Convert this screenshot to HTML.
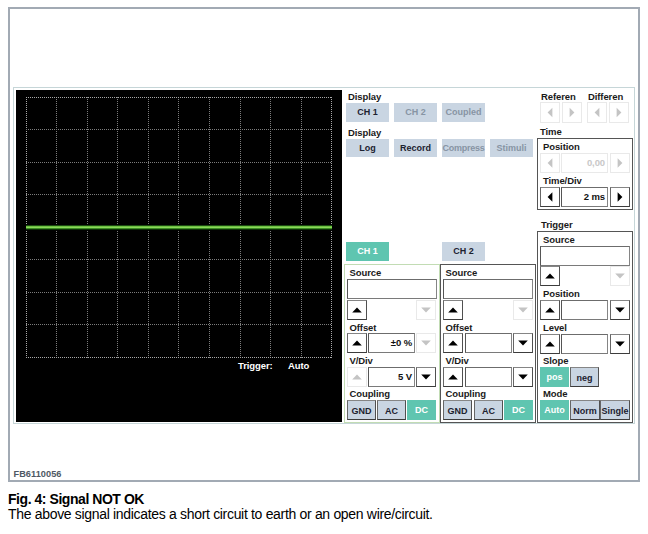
<!DOCTYPE html>
<html><head><meta charset="utf-8"><style>
html,body{margin:0;padding:0;background:#fff;width:648px;height:534px;overflow:hidden;}
body>div,#c>div{position:absolute;box-sizing:border-box;}
.t{position:absolute;font:bold 9.5px "Liberation Sans", sans-serif;line-height:7px;letter-spacing:-0.1px;white-space:nowrap;color:#1a1a1a;}
.b{position:absolute;box-sizing:border-box;font:bold 9px "Liberation Sans", sans-serif;text-align:center;white-space:nowrap;}
svg{position:absolute;left:0;top:0;}
</style></head><body>

<div style="left:8px;top:7px;width:632px;height:475px;border:2px solid #a2aab4;"></div>
<div style="left:13px;top:87px;width:622px;height:337px;border:1px solid #c6d6d8;"></div>
<div style="left:16px;top:90px;width:326px;height:332px;background:#000;"></div>
<svg width="648" height="534" style="position:absolute;left:0;top:0"><line x1="26.5" y1="97" x2="26.5" y2="358" stroke="#a8a8a8" stroke-dasharray="1 1"/><line x1="56.5" y1="97" x2="56.5" y2="358" stroke="#7c7c7c" stroke-dasharray="1 1"/><line x1="87.5" y1="97" x2="87.5" y2="358" stroke="#7c7c7c" stroke-dasharray="1 1"/><line x1="117.5" y1="97" x2="117.5" y2="358" stroke="#7c7c7c" stroke-dasharray="1 1"/><line x1="148.5" y1="97" x2="148.5" y2="358" stroke="#7c7c7c" stroke-dasharray="1 1"/><line x1="178.5" y1="97" x2="178.5" y2="358" stroke="#7c7c7c" stroke-dasharray="1 1"/><line x1="209.5" y1="97" x2="209.5" y2="358" stroke="#7c7c7c" stroke-dasharray="1 1"/><line x1="240.5" y1="97" x2="240.5" y2="358" stroke="#7c7c7c" stroke-dasharray="1 1"/><line x1="270.5" y1="97" x2="270.5" y2="358" stroke="#7c7c7c" stroke-dasharray="1 1"/><line x1="301.5" y1="97" x2="301.5" y2="358" stroke="#7c7c7c" stroke-dasharray="1 1"/><line x1="331.5" y1="97" x2="331.5" y2="358" stroke="#a8a8a8" stroke-dasharray="1 1"/><line x1="26" y1="97.5" x2="332" y2="97.5" stroke="#a8a8a8" stroke-dasharray="1 1"/><line x1="26" y1="129.5" x2="332" y2="129.5" stroke="#7c7c7c" stroke-dasharray="1 1"/><line x1="26" y1="162.5" x2="332" y2="162.5" stroke="#7c7c7c" stroke-dasharray="1 1"/><line x1="26" y1="194.5" x2="332" y2="194.5" stroke="#7c7c7c" stroke-dasharray="1 1"/><line x1="26" y1="227.5" x2="332" y2="227.5" stroke="#7c7c7c" stroke-dasharray="1 1"/><line x1="26" y1="259.5" x2="332" y2="259.5" stroke="#7c7c7c" stroke-dasharray="1 1"/><line x1="26" y1="292.5" x2="332" y2="292.5" stroke="#7c7c7c" stroke-dasharray="1 1"/><line x1="26" y1="324.5" x2="332" y2="324.5" stroke="#7c7c7c" stroke-dasharray="1 1"/><line x1="26" y1="357.5" x2="332" y2="357.5" stroke="#a8a8a8" stroke-dasharray="1 1"/><rect x="26" y="225" width="306" height="1" fill="#1a4a10"/><rect x="26" y="226" width="306" height="1" fill="#6cc040"/><rect x="26" y="227" width="306" height="1" fill="#8ad85a"/><rect x="26" y="228" width="306" height="1" fill="#3c8c24"/><rect x="26" y="229" width="306" height="1" fill="#0c3006"/></svg>
<div class="t" style="left:238px;top:362px;color:#fff;">Trigger:</div>
<div class="t" style="left:288px;top:362px;color:#fff;">Auto</div>
<div class="t" style="left:348px;top:93px;">Display</div>
<div class="b" style="left:346px;top:103px;width:43px;height:19px;line-height:19px;background:#c9d5e2;color:#1c2230;"><span style="">CH 1</span></div>
<div class="b" style="left:394px;top:103px;width:43px;height:19px;line-height:19px;background:#c9d5e2;color:#8794a4;"><span style="">CH 2</span></div>
<div class="b" style="left:442px;top:103px;width:43px;height:19px;line-height:19px;background:#c9d5e2;color:#8794a4;"><span style="">Coupled</span></div>
<div class="t" style="left:348px;top:129px;">Display</div>
<div class="b" style="left:346px;top:139px;width:43px;height:18px;line-height:18px;background:#c9d5e2;color:#1c2230;"><span style="">Log</span></div>
<div class="b" style="left:394px;top:139px;width:43px;height:18px;line-height:18px;background:#c9d5e2;color:#1c2230;"><span style="">Record</span></div>
<div class="b" style="left:442px;top:139px;width:43px;height:18px;line-height:18px;background:#c9d5e2;color:#8794a4;letter-spacing:-0.25px;"><span style="">Compress</span></div>
<div class="b" style="left:490px;top:139px;width:43px;height:18px;line-height:18px;background:#c9d5e2;color:#8794a4;"><span style="">Stimuli</span></div>
<div class="t" style="left:541px;top:93px;">Referen</div>
<div class="t" style="left:588px;top:93px;">Differen</div>
<div style="left:540px;top:102px;width:20px;height:21px;border:1px solid #e9e9e9;background:#fff;"></div>
<div style="left:562px;top:102px;width:20px;height:21px;border:1px solid #e9e9e9;background:#fff;"></div>
<div style="left:587px;top:102px;width:20px;height:21px;border:1px solid #e9e9e9;background:#fff;"></div>
<div style="left:609px;top:102px;width:20px;height:21px;border:1px solid #e9e9e9;background:#fff;"></div>
<div class="t" style="left:540px;top:128px;">Time</div>
<div style="left:537px;top:138px;width:96px;height:72px;border:1px solid #555;"></div>
<div class="t" style="left:543px;top:143px;">Position</div>
<div style="left:540px;top:153px;width:20px;height:20px;border:1px solid #e9e9e9;background:#fff;"></div>
<div style="left:561px;top:153px;width:47px;height:20px;border:1px solid #e9e9e9;background:#fff;"></div>
<div class="t" style="left:561px;top:153px;width:44px;height:20px;line-height:20px;text-align:right;color:#c8c8c8;">0,00</div>
<div style="left:610px;top:153px;width:20px;height:20px;border:1px solid #e9e9e9;background:#fff;"></div>
<div class="t" style="left:543px;top:177px;">Time/Div</div>
<div style="left:540px;top:187px;width:20px;height:20px;border:1px solid #555;border-color:#858585 #505050 #3c3c3c #666;background:#fff;"></div>
<div style="left:561px;top:187px;width:47px;height:20px;border:1px solid #777;border-color:#6c6c6c #858585 #7a7a7a #555;background:#fff;"></div>
<div class="t" style="left:561px;top:187px;width:44px;height:20px;line-height:20px;text-align:right;color:#111;">2 ms</div>
<div style="left:610px;top:187px;width:20px;height:20px;border:1px solid #555;border-color:#858585 #505050 #3c3c3c #666;background:#fff;"></div>
<div class="b" style="left:346px;top:242px;width:43px;height:19px;line-height:19px;background:#5fc5b0;color:#fff;"><span style="">CH 1</span></div>
<div class="b" style="left:442px;top:242px;width:43px;height:19px;line-height:19px;background:#c9d5e2;color:#1c2230;"><span style="">CH 2</span></div>
<div style="left:344px;top:264px;width:96px;height:159px;border:1px solid #c2dcb4;"></div>
<div class="t" style="left:349.5px;top:269px;">Source</div>
<div style="left:347px;top:279px;width:90px;height:20px;border:1px solid #777;border-color:#6c6c6c #858585 #7a7a7a #555;background:#fff;"></div>
<div style="left:347px;top:300px;width:20px;height:20px;border:1px solid #555;border-color:#858585 #505050 #3c3c3c #666;background:#fff;"></div>
<div style="left:416px;top:300px;width:20px;height:20px;border:1px solid #e9e9e9;background:#fff;"></div>
<div class="t" style="left:349.5px;top:324px;">Offset</div>
<div style="left:347px;top:333px;width:20px;height:20px;border:1px solid #555;border-color:#858585 #505050 #3c3c3c #666;background:#fff;"></div>
<div style="left:368px;top:333px;width:47px;height:20px;border:1px solid #777;border-color:#6c6c6c #858585 #7a7a7a #555;background:#fff;"></div>
<div class="t" style="left:368px;top:333px;width:44px;height:20px;line-height:20px;text-align:right;color:#111;">&plusmn;0 %</div>
<div style="left:416px;top:333px;width:20px;height:20px;border:1px solid #e9e9e9;background:#fff;"></div>
<div class="t" style="left:349.5px;top:357px;">V/Div</div>
<div style="left:347px;top:367px;width:20px;height:20px;border:1px solid #e9e9e9;background:#fff;"></div>
<div style="left:368px;top:367px;width:47px;height:20px;border:1px solid #777;border-color:#6c6c6c #858585 #7a7a7a #555;background:#fff;"></div>
<div class="t" style="left:368px;top:367px;width:44px;height:20px;line-height:20px;text-align:right;color:#111;">5 V</div>
<div style="left:416px;top:367px;width:20px;height:20px;border:1px solid #555;border-color:#858585 #505050 #3c3c3c #666;background:#fff;"></div>
<div class="t" style="left:349.5px;top:390px;">Coupling</div>
<div class="b" style="left:347px;top:400px;width:29px;height:20px;line-height:20px;border:1px solid #555;border-color:#858585 #505050 #3c3c3c #666;background:#fff;background:#c9d5e2;color:#1c2230;"><span style="">GND</span></div>
<div class="b" style="left:377px;top:400px;width:29px;height:20px;line-height:20px;border:1px solid #555;border-color:#858585 #505050 #3c3c3c #666;background:#fff;background:#c9d5e2;color:#1c2230;"><span style="">AC</span></div>
<div class="b" style="left:407px;top:400px;width:29px;height:20px;line-height:20px;background:#5fc5b0;color:#fff;"><span style="">DC</span></div>
<div style="left:440px;top:264px;width:96px;height:159px;border:1px solid #555;"></div>
<div class="t" style="left:445.5px;top:269px;">Source</div>
<div style="left:443px;top:279px;width:90px;height:20px;border:1px solid #777;border-color:#6c6c6c #858585 #7a7a7a #555;background:#fff;"></div>
<div style="left:443px;top:300px;width:20px;height:20px;border:1px solid #555;border-color:#858585 #505050 #3c3c3c #666;background:#fff;"></div>
<div style="left:513px;top:300px;width:20px;height:20px;border:1px solid #e9e9e9;background:#fff;"></div>
<div class="t" style="left:445.5px;top:324px;">Offset</div>
<div style="left:443px;top:333px;width:20px;height:20px;border:1px solid #555;border-color:#858585 #505050 #3c3c3c #666;background:#fff;"></div>
<div style="left:465px;top:333px;width:47px;height:20px;border:1px solid #777;border-color:#6c6c6c #858585 #7a7a7a #555;background:#fff;"></div>
<div style="left:513px;top:333px;width:20px;height:20px;border:1px solid #555;border-color:#858585 #505050 #3c3c3c #666;background:#fff;"></div>
<div class="t" style="left:445.5px;top:357px;">V/Div</div>
<div style="left:443px;top:367px;width:20px;height:20px;border:1px solid #555;border-color:#858585 #505050 #3c3c3c #666;background:#fff;"></div>
<div style="left:465px;top:367px;width:47px;height:20px;border:1px solid #777;border-color:#6c6c6c #858585 #7a7a7a #555;background:#fff;"></div>
<div style="left:513px;top:367px;width:20px;height:20px;border:1px solid #555;border-color:#858585 #505050 #3c3c3c #666;background:#fff;"></div>
<div class="t" style="left:445.5px;top:390px;">Coupling</div>
<div class="b" style="left:443px;top:400px;width:29px;height:20px;line-height:20px;border:1px solid #555;border-color:#858585 #505050 #3c3c3c #666;background:#fff;background:#c9d5e2;color:#1c2230;"><span style="">GND</span></div>
<div class="b" style="left:474px;top:400px;width:29px;height:20px;line-height:20px;border:1px solid #555;border-color:#858585 #505050 #3c3c3c #666;background:#fff;background:#c9d5e2;color:#1c2230;"><span style="">AC</span></div>
<div class="b" style="left:504px;top:400px;width:29px;height:20px;line-height:20px;background:#5fc5b0;color:#fff;"><span style="">DC</span></div>
<div class="t" style="left:541px;top:221px;">Trigger</div>
<div style="left:537px;top:231px;width:96px;height:192px;border:1px solid #555;"></div>
<div class="t" style="left:543px;top:236px;">Source</div>
<div style="left:540px;top:246px;width:90px;height:20px;border:1px solid #777;border-color:#6c6c6c #858585 #7a7a7a #555;background:#fff;"></div>
<div style="left:540px;top:266px;width:20px;height:20px;border:1px solid #555;border-color:#858585 #505050 #3c3c3c #666;background:#fff;"></div>
<div style="left:610px;top:266px;width:20px;height:20px;border:1px solid #e9e9e9;background:#fff;"></div>
<div class="t" style="left:543px;top:290px;">Position</div>
<div style="left:540px;top:300px;width:20px;height:20px;border:1px solid #555;border-color:#858585 #505050 #3c3c3c #666;background:#fff;"></div>
<div style="left:561px;top:300px;width:47px;height:20px;border:1px solid #777;border-color:#6c6c6c #858585 #7a7a7a #555;background:#fff;"></div>
<div style="left:610px;top:300px;width:20px;height:20px;border:1px solid #555;border-color:#858585 #505050 #3c3c3c #666;background:#fff;"></div>
<div class="t" style="left:543px;top:324px;">Level</div>
<div style="left:540px;top:334px;width:20px;height:20px;border:1px solid #555;border-color:#858585 #505050 #3c3c3c #666;background:#fff;"></div>
<div style="left:561px;top:334px;width:47px;height:20px;border:1px solid #777;border-color:#6c6c6c #858585 #7a7a7a #555;background:#fff;"></div>
<div style="left:610px;top:334px;width:20px;height:20px;border:1px solid #555;border-color:#858585 #505050 #3c3c3c #666;background:#fff;"></div>
<div class="t" style="left:543px;top:357px;">Slope</div>
<div class="b" style="left:540px;top:367px;width:29px;height:20px;line-height:20px;background:#5fc5b0;color:#fff;"><span style="">pos</span></div>
<div class="b" style="left:570px;top:367px;width:29px;height:20px;line-height:20px;border:1px solid #555;border-color:#858585 #505050 #3c3c3c #666;background:#fff;background:#c9d5e2;color:#1c2230;"><span style="">neg</span></div>
<div class="t" style="left:543px;top:390px;">Mode</div>
<div class="b" style="left:540px;top:400px;width:29px;height:20px;line-height:20px;background:#5fc5b0;color:#fff;"><span style="">Auto</span></div>
<div class="b" style="left:570px;top:400px;width:30px;height:20px;line-height:20px;border:1px solid #555;border-color:#858585 #505050 #3c3c3c #666;background:#fff;background:#c9d5e2;color:#1c2230;"><span style="">Norm</span></div>
<div class="b" style="left:600px;top:400px;width:30px;height:20px;line-height:20px;border:1px solid #555;border-color:#858585 #505050 #3c3c3c #666;background:#fff;background:#c9d5e2;color:#1c2230;"><span style="">Single</span></div>
<svg width="648" height="534" style="position:absolute;left:0;top:0"><polygon points="552.4,107.7 552.4,117.3 547.6,112.5" fill="#c4c4c4"/><polygon points="569.6,107.7 569.6,117.3 574.4,112.5" fill="#c4c4c4"/><polygon points="599.4,107.7 599.4,117.3 594.6,112.5" fill="#c4c4c4"/><polygon points="616.6,107.7 616.6,117.3 621.4,112.5" fill="#c4c4c4"/><polygon points="552.4,158.2 552.4,167.8 547.6,163.0" fill="#c4c4c4"/><polygon points="617.6,158.2 617.6,167.8 622.4,163.0" fill="#c4c4c4"/><polygon points="552.4,192.2 552.4,201.8 547.6,197.0" fill="#000"/><polygon points="617.6,192.2 617.6,201.8 622.4,197.0" fill="#000"/><polygon points="352.2,312.4 361.8,312.4 357.0,307.6" fill="#000"/><polygon points="421.2,307.6 430.8,307.6 426.0,312.4" fill="#c4c4c4"/><polygon points="352.2,345.4 361.8,345.4 357.0,340.6" fill="#000"/><polygon points="421.2,340.6 430.8,340.6 426.0,345.4" fill="#c4c4c4"/><polygon points="352.2,379.4 361.8,379.4 357.0,374.6" fill="#c4c4c4"/><polygon points="421.2,374.6 430.8,374.6 426.0,379.4" fill="#000"/><polygon points="448.2,312.4 457.8,312.4 453.0,307.6" fill="#000"/><polygon points="518.2,307.6 527.8,307.6 523.0,312.4" fill="#c4c4c4"/><polygon points="448.2,345.4 457.8,345.4 453.0,340.6" fill="#000"/><polygon points="518.2,340.6 527.8,340.6 523.0,345.4" fill="#000"/><polygon points="448.2,379.4 457.8,379.4 453.0,374.6" fill="#000"/><polygon points="518.2,374.6 527.8,374.6 523.0,379.4" fill="#000"/><polygon points="545.2,278.4 554.8,278.4 550.0,273.6" fill="#000"/><polygon points="615.2,273.6 624.8,273.6 620.0,278.4" fill="#c4c4c4"/><polygon points="545.2,312.4 554.8,312.4 550.0,307.6" fill="#000"/><polygon points="615.2,307.6 624.8,307.6 620.0,312.4" fill="#000"/><polygon points="545.2,346.4 554.8,346.4 550.0,341.6" fill="#000"/><polygon points="615.2,341.6 624.8,341.6 620.0,346.4" fill="#000"/></svg>
<div class="t" style="left:13.5px;top:471px;color:#4e5864;font-size:9.2px;letter-spacing:0.05px;">FB6110056</div>
<div class="t" style="left:8px;top:492px;font-size:14px;line-height:14px;color:#000;letter-spacing:-0.45px;">Fig. 4: Signal NOT OK</div>
<div class="t" style="left:8px;top:507px;font-weight:normal;font-size:14px;line-height:14px;color:#000;letter-spacing:-0.32px;">The above signal indicates a short circuit to earth or an open wire/circuit.</div>
</body></html>
